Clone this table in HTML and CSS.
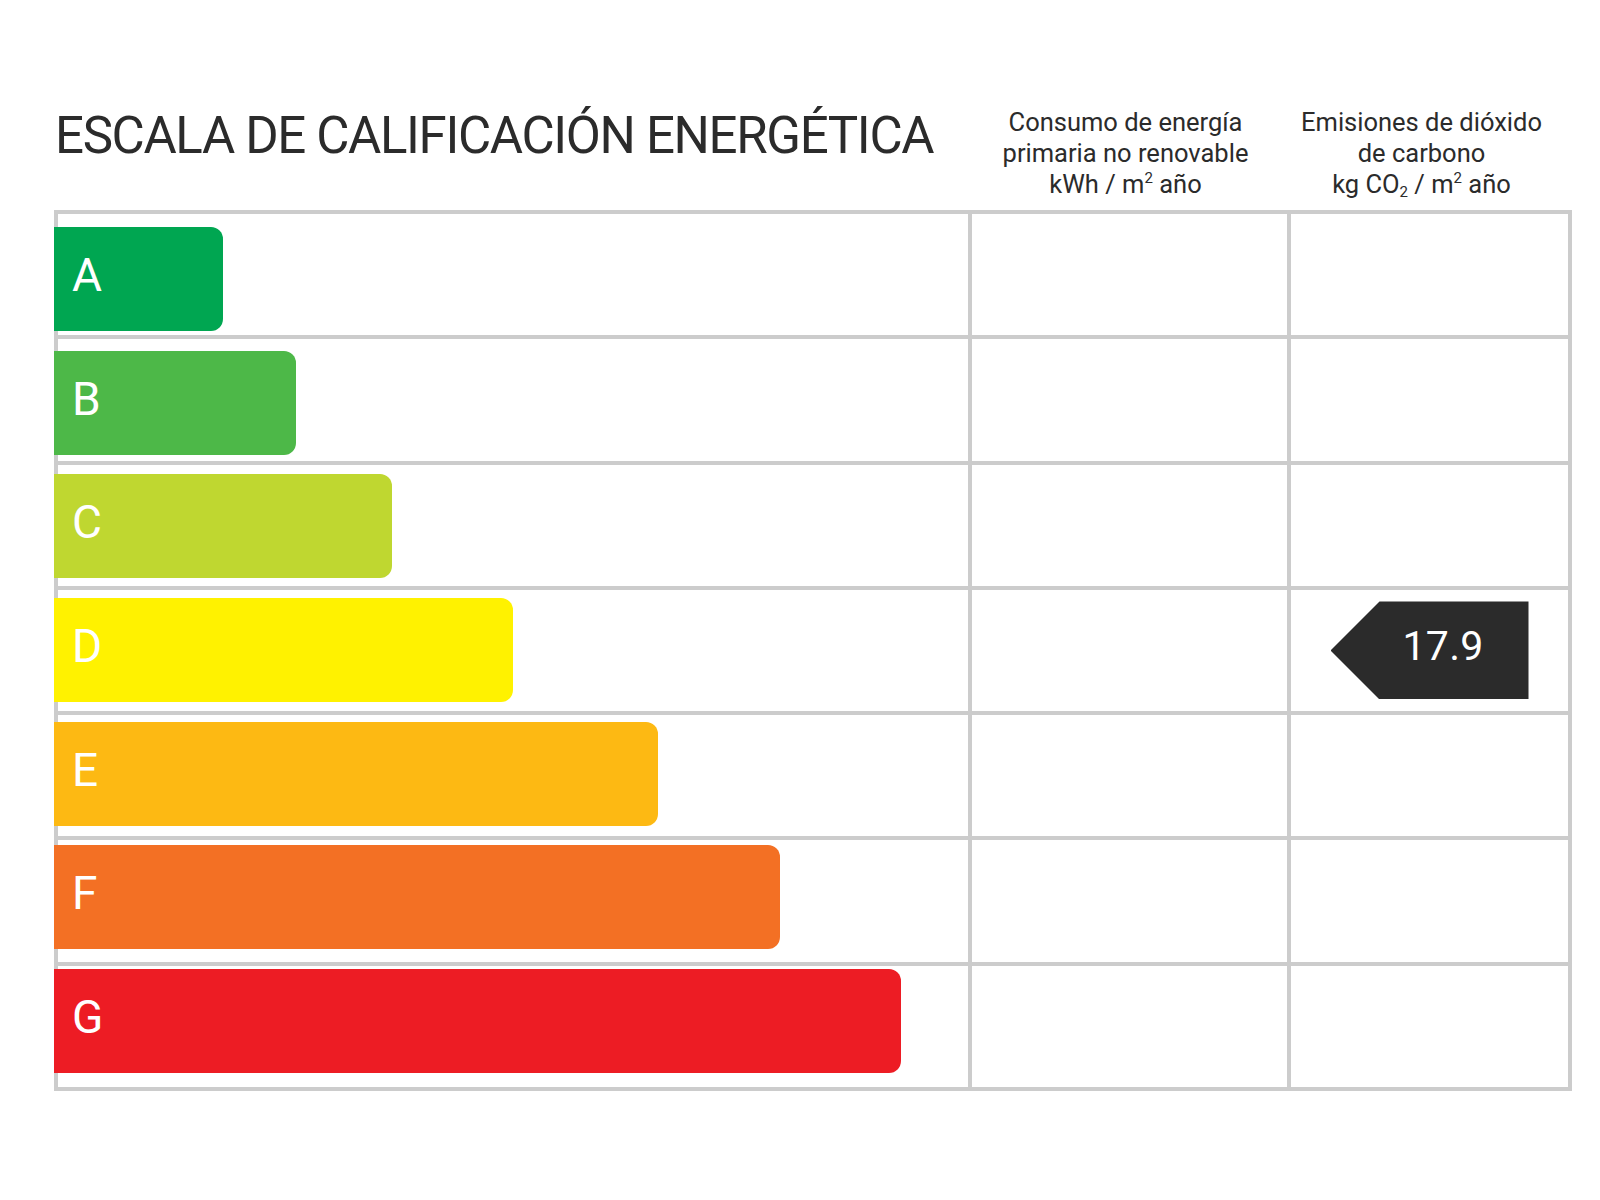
FILE: index.html
```html
<!DOCTYPE html>
<html lang="es">
<head>
<meta charset="utf-8">
<title>Escala de calificación energética</title>
<link rel="stylesheet" href="styles.css">
</head>
<body>
<div class="page">
  <div class="header">
    <h1 class="title">ESCALA DE CALIFICACIÓN ENERGÉTICA</h1>
    <div class="col-head col-head-energy">Consumo de energía<br>primaria no renovable<br>kWh / m<sup>2</sup> año</div>
    <div class="col-head col-head-co2">Emisiones de dióxido<br>de carbono<br>kg CO<sub>2</sub> / m<sup>2</sup> año</div>
  </div>
  <div class="scale">
    <div class="cell c1 r1"></div><div class="cell c2 r1"></div><div class="cell c3 r1"></div>
    <div class="cell c1 r2"></div><div class="cell c2 r2"></div><div class="cell c3 r2"></div>
    <div class="cell c1 r3"></div><div class="cell c2 r3"></div><div class="cell c3 r3"></div>
    <div class="cell c1 r4"></div><div class="cell c2 r4"></div><div class="cell c3 r4 value-cell"><div class="tag">17.9</div></div>
    <div class="cell c1 r5"></div><div class="cell c2 r5"></div><div class="cell c3 r5"></div>
    <div class="cell c1 r6"></div><div class="cell c2 r6"></div><div class="cell c3 r6"></div>
    <div class="cell c1 r7"></div><div class="cell c2 r7"></div><div class="cell c3 r7"></div>
    <div class="bars">
      <div class="bar bar-a">A</div>
      <div class="bar bar-b">B</div>
      <div class="bar bar-c">C</div>
      <div class="bar bar-d">D</div>
      <div class="bar bar-e">E</div>
      <div class="bar bar-f">F</div>
      <div class="bar bar-g">G</div>
    </div>
  </div>
</div>
</body>
</html>
```
FILE: styles.css
```css
html, body {
  margin: 0;
  padding: 0;
  background: #ffffff;
}
body {
  font-family: Roboto, "Liberation Sans", sans-serif;
  color: #2b2b2b;
}
.page {
  padding: 107px 0 0 54px;
}
.header {
  display: grid;
  grid-template-columns: 910px 315px 277px;
  column-gap: 4px;
  padding: 0 4px;
  align-items: start;
  margin-bottom: 10px;
}
.title {
  margin: 3px 0 0 -3px;
  font-size: 51px;
  line-height: 51px;
  font-weight: 400;
  letter-spacing: -1.35px;
  white-space: nowrap;
  color: #2b2b2b;
}
.col-head {
  text-align: center;
  font-size: 25.5px;
  line-height: 31px;
  color: #2b2b2b;
  white-space: nowrap;
}
.col-head-energy { padding-right: 8px; }
.col-head-co2 { padding-right: 16px; }
.col-head sup,
.col-head sub {
  font-size: 15px;
  line-height: 0;
  position: relative;
  vertical-align: baseline;
}
.col-head sup { top: -10px; }
.col-head sub { top: 4px; }
.scale {
  display: grid;
  grid-template-columns: 910px 315px 277px;
  grid-template-rows: repeat(7, 1fr);
  gap: 4px;
  padding: 4px;
  height: 881px;
  width: 1518px;
  box-sizing: border-box;
  background: #cccccc;
}
.cell {
  background: #ffffff;
}
.c1 { grid-column: 1; }
.c2 { grid-column: 2; }
.c3 { grid-column: 3; }
.r1 { grid-row: 1; }
.r2 { grid-row: 2; }
.r3 { grid-row: 3; }
.r4 { grid-row: 4; }
.r5 { grid-row: 5; }
.r6 { grid-row: 6; }
.r7 { grid-row: 7; }
.value-cell {
  display: flex;
  align-items: center;
  justify-content: center;
}
.tag {
  width: 198px;
  height: 98px;
  box-sizing: border-box;
  background: #2b2b2b;
  clip-path: polygon(49px 0, 100% 0, 100% 100%, 49px 100%, 0 50%);
  color: #ffffff;
  font-size: 41px;
  line-height: 90px;
  padding-left: 72px;
  letter-spacing: 0.3px;
}
.bars {
  grid-column: 1;
  grid-row: 1 / 8;
  margin-left: -4px;
  padding-top: 13px;
  display: flex;
  flex-direction: column;
  gap: 19.67px;
  z-index: 1;
}
.bar {
  height: 104px;
  flex: none;
  box-sizing: border-box;
  border-radius: 0 12px 12px 0;
  padding-left: 18px;
  color: #ffffff;
  font-size: 46px;
  line-height: 96px;
}
.bar-a { width: 169px; background: #00a651; }
.bar-b { width: 242px; background: #4db848; }
.bar-c { width: 338px; background: #bfd730; }
.bar-d { width: 459px; background: #fff200; }
.bar-e { width: 604px; background: #fdb913; }
.bar-f { width: 726px; background: #f37024; }
.bar-g { width: 847px; background: #ed1c24; }
```
